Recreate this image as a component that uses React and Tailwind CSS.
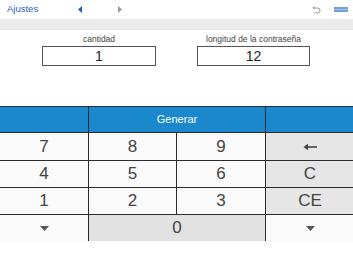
function BackArrow() {
  return (
    <svg width="14" height="8" viewBox="0 0 14 8">
      <path d="M14 4 H2" stroke="#444" strokeWidth="1.6" />
      <path d="M0.5 4 L5 0.8 V7.2 Z" fill="#444" />
    </svg>
  );
}

export default function App() {
  const keys = [
    ["7", "8", "9", "←"],
    ["4", "5", "6", "C"],
    ["1", "2", "3", "CE"],
  ];

  return (
    <div
      className="w-[353px] h-[253px] bg-white overflow-hidden"
      style={{ fontFamily: '"Liberation Sans", Arial, sans-serif' }}
    >
      {/* Top bar */}
      <div className="h-[19px] flex items-center relative">
        <span className="ml-[7px] text-[9.5px] text-[#1d5fbf]">Ajustes</span>
        <svg className="absolute left-[78px] top-[6px]" width="4" height="7" viewBox="0 0 4 7">
          <path d="M4 0 L0 3.5 L4 7 Z" fill="#1d5fbf" />
        </svg>
        <svg className="absolute left-[118px] top-[6px]" width="4" height="7" viewBox="0 0 4 7">
          <path d="M0 0 L4 3.5 L0 7 Z" fill="#9a9a9a" />
        </svg>
        <svg className="absolute left-[312px] top-[5px]" width="9" height="9" viewBox="0 0 9 9">
          <path d="M2 1.5 L1 3 L2.6 3.9 M1.2 3 H5.5 A2.5 2.5 0 0 1 5.5 8 H2.5" fill="none" stroke="#8a8a8a" strokeWidth="0.9" />
        </svg>
        <div className="absolute left-[334px] top-[7px] w-[14px] h-[5px] bg-[#6f9fd8] flex flex-col justify-center">
          <div className="h-px bg-[#a9c6ea]" />
        </div>
      </div>
      <div className="h-[11px] bg-[#ebebeb]" />

      {/* Inputs */}
      <div className="h-[76px] flex gap-[41px] pl-[42px] pt-[3px]">
        <div className="w-[114px] flex flex-col items-center">
          <div className="text-[8.5px] leading-[12px] text-[#444]">cantidad</div>
          <div className="mt-[1px] w-[114px] h-[20px] border border-[#555] flex items-center justify-center text-[14px] text-[#222]">
            1
          </div>
        </div>
        <div className="w-[113px] flex flex-col items-center">
          <div className="text-[8.5px] leading-[12px] text-[#444] whitespace-nowrap">longitud de la contraseña</div>
          <div className="mt-[1px] w-[113px] h-[20px] border border-[#555] flex items-center justify-center text-[14px] text-[#222]">
            12
          </div>
        </div>
      </div>

      {/* Keypad */}
      <div className="grid grid-cols-[88px_87px_88px_88px] gap-px bg-[#2b2b2b] pt-px">
        <div className="h-[25px] bg-[#1a88cc]" />
        <div className="col-span-2 h-[25px] bg-[#1a88cc] flex items-center justify-center text-white text-[11px]">
          Generar
        </div>
        <div className="h-[25px] bg-[#1a88cc]" />
        {keys.map((row, r) =>
          row.map((k, c) => (
            <div
              key={`${r}-${c}`}
              className={`${r === 0 ? "h-[27px]" : "h-[26px]"} flex items-center justify-center text-[17px] text-[#444] ${
                c === 3 ? "bg-[#e6e6e6]" : "bg-[#fafafa]"
              }`}
            >
              {k === "←" ? <BackArrow /> : k}
            </div>
          ))
        )}
        <div className="h-[26px] bg-[#fafafa] flex items-center justify-center">
          <svg width="9" height="5" viewBox="0 0 9 5">
            <path d="M0 0 H9 L4.5 5 Z" fill="#555" />
          </svg>
        </div>
        <div className="col-span-2 h-[26px] bg-[#e2e2e2] flex items-center justify-center text-[17px] text-[#444]">
          0
        </div>
        <div className="h-[26px] bg-[#fafafa] flex items-center justify-center">
          <svg width="9" height="5" viewBox="0 0 9 5">
            <path d="M0 0 H9 L4.5 5 Z" fill="#555" />
          </svg>
        </div>
      </div>
    </div>
  );
}
